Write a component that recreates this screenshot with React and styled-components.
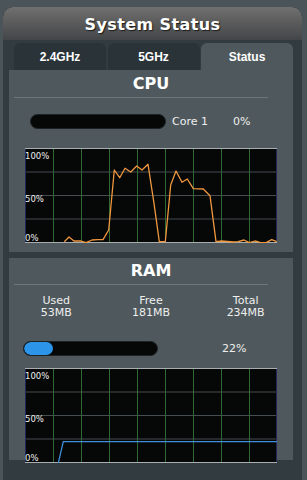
import React from 'react';
import styled, { createGlobalStyle } from 'styled-components';

const GlobalStyle = createGlobalStyle`
  html, body {
    margin: 0;
    padding: 0;
    background: #4b5458;
    font-family: "DejaVu Sans", Verdana, sans-serif;
  }
`;

const Frame = styled.div`
  margin: 7px 5px 0 3px;
  width: 299px;
  height: 473px;
  background: #323c40;
  border-radius: 10px 10px 0 0;
  display: flex;
  flex-direction: column;
  overflow: hidden;
`;

const Header = styled.div`
  height: 33px;
  flex: none;
  display: flex;
  align-items: center;
  justify-content: center;
  background: linear-gradient(#707070, #5c5c5c 45%, #434648);
  border-radius: 10px 10px 0 0;
  color: #fff;
  font-family: "DejaVu Sans", Verdana, sans-serif;
  font-weight: bold;
  font-size: 16px;
  letter-spacing: 0.4px;
  text-shadow: 1px 1px 1px #1a1a1a;
  padding-top: 2px;
  box-sizing: border-box;
`;

const Body = styled.div`
  padding: 3px 9px 0 6px;
  display: flex;
  flex-direction: column;
`;

const Tabs = styled.div`
  display: flex;
  gap: 1.5px;
  margin-left: 5px;
  height: 27px;
`;

const Tab = styled.div`
  width: 92px;
  display: flex;
  align-items: center;
  justify-content: center;
  border-radius: 6px 6px 0 0;
  background: ${p => (p.$active ? '#4f595d' : '#2a3438')};
  color: #fff;
  font-family: "Liberation Sans", Arial, sans-serif;
  font-weight: bold;
  font-size: 12px;
`;

const Panel = styled.div`
  background: #4f595d;
  height: ${p => p.$h}px;
  margin-bottom: 6px;
`;

const Title = styled.div`
  height: ${p => p.$h}px;
  display: flex;
  align-items: flex-end;
  justify-content: center;
  color: #fff;
  font-weight: bold;
  font-size: 16px;
  line-height: 1;
`;

const Rule = styled.div`
  margin: ${p => p.$mt}px 0 0 5px;
  width: 254px;
  height: 1px;
  background: #6d777b;
`;

const BarRow = styled.div`
  display: flex;
  align-items: center;
  margin: ${p => p.$mt}px 0 0 ${p => p.$ml}px;
  height: 15px;
  color: #eee;
  font-size: 11px;
`;

const Track = styled.div`
  width: ${p => p.$w}px;
  height: 15px;
  border-radius: 8px;
  background: #060707;
  box-sizing: border-box;
  border: 1px solid #1d2224;
  overflow: hidden;
  flex: none;
`;

const Fill = styled.div`
  height: 100%;
  background: #2c95ea;
  border-radius: 7px;
`;

const Label = styled.span`
  margin-left: ${p => p.$ml}px;
  white-space: nowrap;
`;

const ChartBox = styled.div`
  margin: ${p => p.$mt}px 0 0 16px;
  width: 252px;
  height: 95px;
`;

const Stats = styled.div`
  display: grid;
  grid-template-columns: repeat(3, 1fr);
  margin-top: 10px;
  color: #eee;
  font-size: 11px;
  line-height: 12px;
  text-align: center;
`;

const cpuPoints = [
  [39.3, 93.7], [44, 89], [49, 93], [56, 93], [61, 94.7], [67, 92], [73, 91.7], [78, 91.7],
  [83.7, 82], [89.3, 22], [94.7, 29.7], [100, 20.3], [105.7, 24], [111.7, 18], [117, 22],
  [123, 16.3], [129, 55.3], [134.3, 93.7], [140.3, 93.7], [145.7, 37], [151, 23],
  [157, 34.3], [162.3, 31], [168.3, 40.7], [178.3, 41], [185, 47.7], [191, 93.7],
  [196.7, 93], [208, 94], [213, 93.7], [219, 92], [224.3, 94.7], [230, 93], [235, 94.3],
  [241, 94.7], [246.7, 91.7], [251.7, 93.7],
];

const ramPoints = [[33.3, 95], [38.3, 73.7], [252, 73.7]];

const Chart = ({ points, color, mt }) => (
  <ChartBox $mt={mt}>
    <svg width="252" height="95" viewBox="0 0 252 95" style={{ display: 'block' }}>
      <rect x="0" y="0" width="252" height="95" fill="#060707" />
      {[24, 47.5, 71].map(y => (
        <line key={y} x1="0" x2="252" y1={y} y2={y} stroke="#464d50" strokeWidth="1" />
      ))}
      {[28, 56, 84, 112, 140, 168, 196, 224].map(x => (
        <line key={x} x1={x + 0.5} x2={x + 0.5} y1="0" y2="95" stroke="#2f6a33" strokeWidth="1" />
      ))}
      <line x1="0.5" x2="0.5" y1="0" y2="95" stroke="#22265a" />
      <line x1="251.5" x2="251.5" y1="0" y2="95" stroke="#22265a" />
      <line x1="0" x2="252" y1="0.5" y2="0.5" stroke="#a9aeb0" />
      <line x1="0" x2="252" y1="94.5" y2="94.5" stroke="#a9aeb0" />
      <polyline
        points={points.map(p => p.join(',')).join(' ')}
        fill="none"
        stroke={color}
        strokeWidth="1.3"
        strokeLinejoin="round"
      />
      <g fill="#f0f0f0" fontFamily="DejaVu Sans, Verdana, sans-serif" fontSize="8.5">
        <text x="0" y="11">100%</text>
        <text x="0" y="54">50%</text>
        <text x="0" y="93">0%</text>
      </g>
    </svg>
  </ChartBox>
);

const App = () => (
  <>
    <GlobalStyle />
    <Frame>
      <Header>System Status</Header>
      <Body>
        <Tabs>
          <Tab>2.4GHz</Tab>
          <Tab>5GHz</Tab>
          <Tab $active>Status</Tab>
        </Tabs>
        <Panel $h={182}>
          <Title $h={22}>CPU</Title>
          <Rule $mt={5} />
          <BarRow $mt={16} $ml={21}>
            <Track $w={136} />
            <Label $ml={6}>Core 1</Label>
            <Label $ml={25}>0%</Label>
          </BarRow>
          <Chart points={cpuPoints} color="#ef973f" mt={19} />
        </Panel>
        <Panel $h={202}>
          <Title $h={21}>RAM</Title>
          <Rule $mt={5} />
          <Stats>
            <div>Used<br />53MB</div>
            <div>Free<br />181MB</div>
            <div>Total<br />234MB</div>
          </Stats>
          <BarRow $mt={22} $ml={14}>
            <Track $w={135}>
              <Fill style={{ width: '22%' }} />
            </Track>
            <Label $ml={64}>22%</Label>
          </BarRow>
          <Chart points={ramPoints} color="#3f8fd8" mt={12} />
        </Panel>
      </Body>
    </Frame>
  </>
);

export default App;
